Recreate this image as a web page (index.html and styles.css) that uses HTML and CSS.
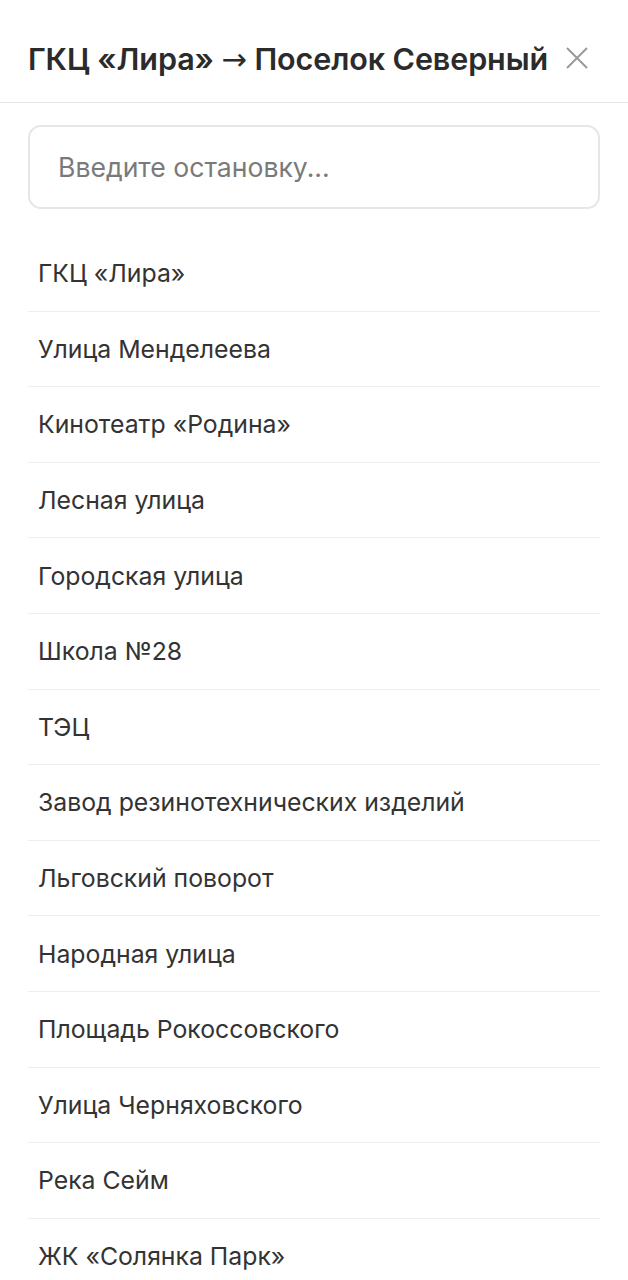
FILE: index.html
```html
<!DOCTYPE html>
<html lang="ru">
<head>
<meta charset="utf-8">
<link rel="stylesheet" href="styles.css">
</head>
<body>
<div class="sheet">
  <header class="header">
    <h1 class="title">ГКЦ «Лира» <span class="arrow">→</span> Поселок Северный</h1>
    <button class="close" aria-label="Закрыть">
      <svg width="22" height="22" viewBox="0 0 22 22"><path d="M1 1L21 21M21 1L1 21" stroke="#9a9a9a" stroke-width="2" fill="none"/></svg>
    </button>
  </header>
  <div class="content">
    <div class="search">
      <input class="search-input" type="text" placeholder="Введите остановку...">
    </div>
    <ul class="list">
      <li class="item">ГКЦ «Лира»</li>
      <li class="item">Улица Менделеева</li>
      <li class="item">Кинотеатр «Родина»</li>
      <li class="item">Лесная улица</li>
      <li class="item">Городская улица</li>
      <li class="item">Школа №28</li>
      <li class="item">ТЭЦ</li>
      <li class="item">Завод резинотехнических изделий</li>
      <li class="item">Льговский поворот</li>
      <li class="item">Народная улица</li>
      <li class="item">Площадь Рокоссовского</li>
      <li class="item">Улица Черняховского</li>
      <li class="item">Река Сейм</li>
      <li class="item">ЖК «Солянка Парк»</li>
    </ul>
  </div>
</div>
</body>
</html>
```

FILE: styles.css
```css
* { box-sizing: border-box; }
html, body { margin: 0; padding: 0; background: #fff; }
body { font-family: Inter, "Noto Sans", sans-serif; color: #333; }
.sheet { width: 628px; }
.header {
  height: 103px;
  display: flex;
  align-items: center;
  justify-content: space-between;
  padding: 14px 40px 0 28px;
  border-bottom: 1px solid #e8e8e8;
}
.title {
  margin: 0;
  font-size: 30.5px;
  font-weight: 600;
  color: #2b2b2b;
  letter-spacing: -0.1px;
  white-space: nowrap;
}
.arrow { font-family: "DejaVu Sans", sans-serif; font-weight: 400; }
.close {
  border: 0;
  background: none;
  padding: 0;
  width: 22px;
  height: 22px;
  display: flex;
}
.content { padding: 22px 28px 0 28px; }
.search { margin-bottom: 27px; }
.search-input {
  width: 100%;
  height: 84px;
  border: 2px solid #e6e6e6;
  border-radius: 13px;
  padding: 0 28px;
  font-family: inherit;
  font-size: 26.6px;
  color: #333;
  outline: none;
}
.search-input::placeholder { color: #7a7a7a; }
.list { list-style: none; margin: 0; padding: 0; }
.item {
  height: 75.6px;
  display: flex;
  align-items: center;
  padding: 0 10px;
  font-size: 24.8px;
  color: #333;
  border-bottom: 1px solid #efefef;
}
```
